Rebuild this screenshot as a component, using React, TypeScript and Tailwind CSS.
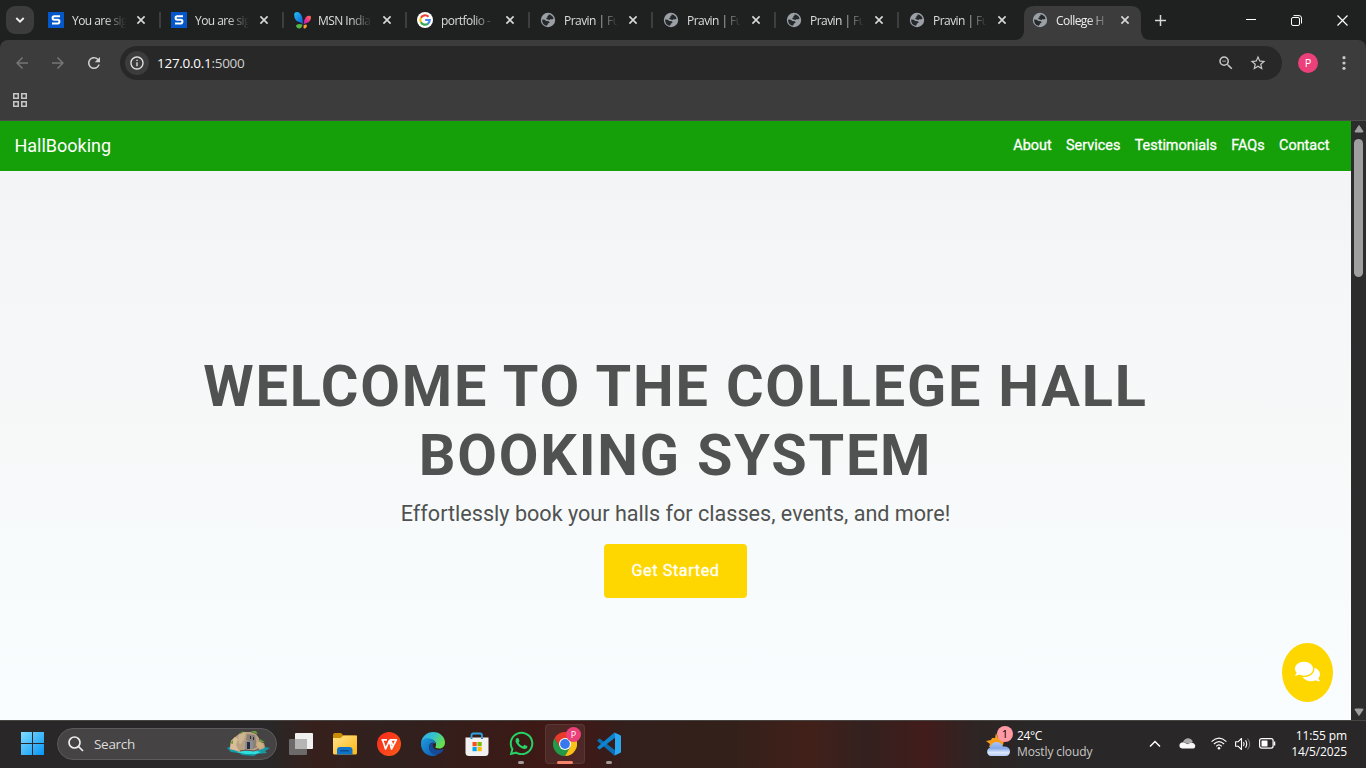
import React from "react";
import { FaComments, FaWhatsapp } from "react-icons/fa";
import { MdStarBorder, MdZoomOut, MdRefresh, MdArrowBack, MdArrowForward, MdInfoOutline } from "react-icons/md";

const UI = "font-['Open_Sans','Noto_Sans',sans-serif]";

function SIcon() {
  return (
    <svg width="16" height="16" viewBox="0 0 16 16">
      <rect width="16" height="16" fill="#0457c9" />
      <path d="M12 4.300H6.200Q4.600 4.300 4.600 6T6.200 7.800H9.900Q11.400 7.800 11.400 9.600T9.900 11.500H4" fill="none" stroke="#fff" strokeWidth="2" />
    </svg>
  );
}

function MsnIcon() {
  return (
    <svg width="18" height="17" viewBox="0 0 18 17" className="shrink-0">
      <defs>
        <linearGradient id="msnA" x1="0" y1="0" x2="1" y2="1">
          <stop offset="0" stopColor="#20c4f4" />
          <stop offset="1" stopColor="#1257d6" />
        </linearGradient>
        <linearGradient id="msnB" x1="1" y1="0" x2="0" y2="1">
          <stop offset="0" stopColor="#ff7a3d" />
          <stop offset=".5" stopColor="#f0308c" />
          <stop offset="1" stopColor="#b01fc8" />
        </linearGradient>
      </defs>
      <path d="M.5 1Q3-.8 5.700 1Q9 4 8.800 12Q7 10.500 4.500 9.800Q1.500 9 .4 5Q0 2 .5 1Z" fill="url(#msnA)" />
      <path d="M16.500 4Q14 3 12 5Q10 7.300 9.600 12.500Q11.500 11 13.500 10.800Q16 10 16.800 7Q17.300 4.800 16.500 4Z" fill="url(#msnB)" />
      <path d="M2 13.500Q3.500 11 8.400 12.500Q8 16.500 5 16.500Q2.500 16.500 2 13.500Z" fill="#55b748" />
      <path d="M9.600 13.300Q13.500 11 12.700 14.800Q11.500 17.500 9.500 16Z" fill="#ff9a2e" />
    </svg>
  );
}

function GoogleIcon() {
  return (
    <svg width="16" height="16" viewBox="0 0 16 16">
      <circle cx="8" cy="8" r="8" fill="#fff" />
      <g fill="none" strokeWidth="2.200">
        <path d="M11.500 4.800A4.700 4.700 0 0 0 3.900 5.700" stroke="#ea4335" />
        <path d="M3.900 5.700A4.700 4.700 0 0 0 3.900 10.300" stroke="#fbbc05" />
        <path d="M3.900 10.300A4.700 4.700 0 0 0 11 11.600" stroke="#34a853" />
        <path d="M8.200 8H12.700A4.700 4.700 0 0 1 11 11.600" stroke="#4285f4" />
      </g>
    </svg>
  );
}

function GlobeIcon() {
  return (
    <svg width="16" height="16" viewBox="0 0 16 16">
      <circle cx="8" cy="8" r="7.200" fill="#9aa0a6" />
      <path d="M8.600 2.300L10.700 3Q13 4.200 13.600 6.600L11.900 7.400L10.700 6.900L9.700 7.900L7.800 7.600L6.200 6.900L6.600 5.700L7.800 5.200L7.200 4.200L8.600 3.600Z" fill="#26292b" />
      <path d="M2.100 7.400L4.800 7.700L6.200 8.900L9 9.300L9.600 10.700L8 11.400L7.500 13L6.500 13.700Q2 12.500 2.100 7.400Z" fill="#26292b" />
    </svg>
  );
}

function CloseX() {
  return (
    <svg width="10" height="10" viewBox="0 0 10 10">
      <path d="M1.400 1.400L8.600 8.600M8.600 1.400L1.400 8.600" stroke="#d8dad9" strokeWidth="1.600" />
    </svg>
  );
}

const tabs: { title: string; icon: () => React.ReactElement; sep?: boolean; active?: boolean }[] = [
  { title: "You are sig", icon: SIcon, sep: true },
  { title: "You are sig", icon: SIcon, sep: true },
  { title: "MSN India", icon: MsnIcon, sep: true },
  { title: "portfolio -", icon: GoogleIcon, sep: true },
  { title: "Pravin | Fu", icon: GlobeIcon, sep: true },
  { title: "Pravin | Fu", icon: GlobeIcon, sep: true },
  { title: "Pravin | Fu", icon: GlobeIcon, sep: true },
  { title: "Pravin | Fu", icon: GlobeIcon },
  { title: "College H", icon: GlobeIcon, active: true },
];

function TabStrip() {
  return (
    <div className="flex h-10 shrink-0 items-stretch bg-[#1f2120]">
      <div className="ml-1.5 mt-1.5 mr-1 flex size-7 items-center justify-center rounded-[9px] bg-[#3c3c3c]">
        <svg width="10" height="8" viewBox="0 0 10 8">
          <path d="M1.300 2L5 5.700L8.700 2" fill="none" stroke="#eee" strokeWidth="1.900" />
        </svg>
      </div>
      {tabs.map((t, i) => (
        <div key={i} className="relative flex w-[123px] items-center pl-[10px]">
          {t.active && (
            <svg className="absolute -left-2 top-1.5" width="137" height="34" viewBox="0 0 137 34">
              <path d="M0 34Q10 34 10 24V10Q10 0 20 0H117Q127 0 127 10V24Q127 34 137 34Z" fill="#3c3c3c" />
            </svg>
          )}
          <span className="relative flex h-4 w-4 items-center">
            <t.icon />
          </span>
          <span
            className={`relative ml-2 mt-px w-[54px] whitespace-nowrap text-[12px] leading-[18px] tracking-[-0.550px] mask-[linear-gradient(to_right,black_60%,transparent)] ${t.active ? "text-[#eee]" : "text-[#dcdedd]"}`}
          >
            {t.title}
          </span>
          <span className="relative ml-[10px]">
            <CloseX />
          </span>
          {t.sep && <span className="ml-auto h-4 w-[2px] bg-[#3d3f3e]" />}
        </div>
      ))}
      <div className="flex w-[31px] items-center pl-[10px]">
        <svg className="shrink-0" width="11" height="11" viewBox="0 0 11 11">
          <path d="M5.500 0V11M0 5.500H11" stroke="#d5d7d6" strokeWidth="1.500" />
        </svg>
      </div>
      <div className="ml-auto flex items-center">
        <div className="flex w-[46px] justify-center">
          <svg width="10" height="10" viewBox="0 0 10 10">
            <path d="M0 4.500H10" stroke="#fff" />
          </svg>
        </div>
        <div className="flex w-[46px] justify-center pr-px">
          <svg width="11" height="11" viewBox="0 0 11 11" fill="none" stroke="#fff">
            <rect x=".5" y="2.500" width="8" height="8" rx="1.500" />
            <path d="M2.500 .6H8Q10.500 .6 10.500 3V8.500" />
          </svg>
        </div>
        <div className="flex w-[46px] justify-center pr-px">
          <svg width="11" height="11" viewBox="0 0 11 11">
            <path d="M.5 .5L10.500 10.500M10.500 .5L.5 10.500" stroke="#fff" strokeWidth="1.200" />
          </svg>
        </div>
      </div>
    </div>
  );
}

function Toolbar() {
  return (
    <div className="shrink-0 bg-[#1f2120]">
      <div className="h-[81px] rounded-t-lg border-b border-[#4d4b4c] bg-[#3c3c3c] pt-1.5">
        <div className="flex h-[34px] items-center">
          <MdArrowBack className="ml-[13px] text-[#757575]" size={18} />
          <MdArrowForward className="ml-[18px] text-[#757575]" size={18} />
          <MdRefresh className="ml-[18px] text-[#d0d0d0]" size={18} />
          <div className="ml-[17px] flex h-[34px] w-[1162px] items-center rounded-full bg-[#282828] pl-[5px]">
            <span className="flex size-6 items-center justify-center rounded-full bg-[#3c3c3c]">
              <MdInfoOutline className="text-[#e3e3e3]" size={16} />
            </span>
            <span className="ml-2 text-[13.500px] leading-4 tracking-[-0.280px] text-white">
              127.0.0.1<span className="text-[#d0d0d0]">:5000</span>
            </span>
            <MdZoomOut className="ml-auto mr-[14px] text-[#c7c7c7]" size={18} />
            <MdStarBorder className="mr-[15px] text-[#c7c7c7]" size={18} />
          </div>
          <span className="ml-4 flex size-5 items-center justify-center rounded-full bg-[#ec407a] text-[11px] text-white">P</span>
          <svg className="ml-6" width="4" height="14" viewBox="0 0 4 14" fill="#c7c7c7">
            <circle cx="2" cy="1.700" r="1.600" />
            <circle cx="2" cy="7" r="1.600" />
            <circle cx="2" cy="12.300" r="1.600" />
          </svg>
        </div>
        <svg className="ml-[13px] mt-[13px]" width="14" height="14" viewBox="0 0 14 14" fill="none" stroke="#c7c7c7" strokeWidth="1.500">
          <rect x=".75" y=".75" width="4.500" height="4.500" />
          <rect x="8.750" y=".75" width="4.500" height="4.500" />
          <rect x=".75" y="8.750" width="4.500" height="4.500" />
          <rect x="8.750" y="8.750" width="4.500" height="4.500" />
        </svg>
      </div>
    </div>
  );
}

function Page() {
  return (
    <div className="flex h-[599px] shrink-0">
      <div className="relative flex w-[1351px] flex-col font-[Roboto,sans-serif]">
        <nav className="flex h-[50px] shrink-0 items-center justify-between bg-[#15a00a] pl-[14.400px] pr-[21.600px] text-white">
          <span className="mb-[2px] text-[18px]">HallBooking</span>
          <div className="flex gap-[14.400px] text-[14.400px] [-webkit-text-stroke:0.3px_white]">
            <span>About</span>
            <span>Services</span>
            <span>Testimonials</span>
            <span>FAQs</span>
            <span>Contact</span>
          </div>
        </nav>
        <main className="flex flex-1 flex-col items-center bg-linear-to-b from-[#f3f4f6] via-[#f7f9f9] to-[#f9fdff] pt-[181px] text-center text-[#505251]">
          <h1 className="w-[1000px] text-[57.600px] font-bold leading-[69.120px] tracking-[1.800px]">
            WELCOME TO THE COLLEGE HALL BOOKING SYSTEM
          </h1>
          <p className="mt-[8px] text-[21.600px] leading-[32.400px]">Effortlessly book your halls for classes, events, and more!</p>
          <button className="mt-[13px] h-[54px] w-[143px] rounded-[4px] bg-[#ffd700] text-[16.200px] tracking-[0.600px] text-white [-webkit-text-stroke:0.3px_white]">
            Get Started
          </button>
        </main>
        <span className="absolute left-[1282px] top-[522px] flex h-[59px] w-[51px] items-center justify-center rounded-[50%] bg-[#ffd700] pb-[2px]">
          <FaComments className="text-white" size={25} />
        </span>
      </div>
      <div className="flex w-[15px] flex-col items-center bg-[#2c2c2c]">
        <svg className="mt-[4px]" width="10" height="8" viewBox="0 0 10 8">
          <path d="M5 .5L9 6.500Q9 7 8.500 7H1.500Q1 7 1 6.500Z" fill="#9f9f9f" stroke="#9f9f9f" strokeLinejoin="round" />
        </svg>
        <div className="mt-[6px] h-[138px] w-[9px] rounded-full bg-[#9f9f9f]" />
        <svg className="mb-[4px] mt-auto" width="10" height="8" viewBox="0 0 10 8">
          <path d="M5 7.500L9 1.500Q9 1 8.500 1H1.500Q1 1 1 1.500Z" fill="#9f9f9f" stroke="#9f9f9f" strokeLinejoin="round" />
        </svg>
      </div>
    </div>
  );
}

function WindowsLogo() {
  return (
    <svg className="ml-[21px] shrink-0" width="23" height="23" viewBox="0 0 23 23">
      <defs>
        <linearGradient id="win" x1="0" y1="0" x2="23" y2="23" gradientUnits="userSpaceOnUse">
          <stop stopColor="#7fdcff" />
          <stop offset="1" stopColor="#0795f5" />
        </linearGradient>
      </defs>
      <path d="M0 0H11V11H0ZM12 0H23V11H12ZM0 12H11V23H0ZM12 12H23V23H12Z" fill="url(#win)" />
    </svg>
  );
}

function IslandArt() {
  return (
    <svg width="44" height="26" viewBox="0 0 44 26">
      <path d="M1 17L6 15L10 18L35 17L39 16L44 17L39 20L41 22L31 23L28 25L16 24L13 22L5 21Z" fill="#159aa5" />
      <path d="M10 21L20 23H30L35 21L30 20H14Z" fill="#30e0df" />
      <path d="M4 18L5 10L9 6L13 3L17 1L25 1L30 3L33 7L34 11L38 12L39 16L37 18L29 20L19 19L14 21L8 19Z" fill="#b9a183" />
      <path d="M4 18L5 10L9 6L12 8L10 14L13 20L8 19Z" fill="#d8bd97" />
      <path d="M13 3L20 1L18 8L14 14L12 8Z" fill="#ceb591" />
      <path d="M21 3L29 4L31 16L27 18L24 11L20 9Z" fill="#8b8078" />
      <path d="M19 10H27V18H19Z" fill="#8d8c91" />
      <path d="M21 11H24V18H21ZM24 5H25V8H24ZM27 6H28V9H27Z" fill="#252c46" />
      <path d="M31 11L35 11L38 16L33 18L30 14Z" fill="#d0af83" />
      <path d="M13 3L17 0V2ZM25 0H30L32 3L28 2ZM34 8L39 11L34 11ZM4 12L7 9L7 13Z" fill="#689c35" />
      <path d="M14 20L20 19L28 20L33 18" fill="none" stroke="#654c4e" />
    </svg>
  );
}

function TaskView() {
  return (
    <svg width="24" height="22" viewBox="0 0 24 22">
      <rect x="6" width="18" height="16" rx="1" fill="#f0f0f0" />
      <rect y="6" width="18" height="16" rx="1" fill="#777" fillOpacity=".85" />
      <rect x="6" y="6" width="12" height="10" fill="#b5b5b5" />
    </svg>
  );
}

function FolderIcon() {
  return (
    <svg width="24" height="22" viewBox="0 0 24 22">
      <defs>
        <linearGradient id="fold" x1="0" y1="0" x2="1" y2="1">
          <stop stopColor="#ffe28a" />
          <stop offset="1" stopColor="#fdb813" />
        </linearGradient>
      </defs>
      <path d="M0 2Q0 0 2 0H8L10.500 2.500H22Q24 2.500 24 5V9H0Z" fill="#c98a06" />
      <path d="M0 5H7.500L10.500 2.500H24V20Q24 21.500 22.500 21.500H1.500Q0 21.500 0 20Z" fill="url(#fold)" />
      <path d="M4 21.500V17Q4 14 7 14H16.500Q19.500 14 19.500 17V21.500Z" fill="#1173c7" />
      <path d="M7.500 17.700H15.500" stroke="#0a4f98" strokeWidth="1.400" strokeLinecap="round" />
    </svg>
  );
}

function WpsIcon() {
  return (
    <svg width="24" height="24" viewBox="0 0 24 24">
      <defs>
        <linearGradient id="wps" x1="0" y1="0" x2="1" y2="1">
          <stop stopColor="#f5281d" />
          <stop offset="1" stopColor="#ff5a19" />
        </linearGradient>
      </defs>
      <circle cx="12" cy="12" r="12" fill="url(#wps)" />
      <path d="M4.500 7.800H10M5.600 8L8.600 17L12.400 8.500L14.500 17L19.300 7.800H13.500L15.600 13" fill="none" stroke="#fff" strokeWidth="1.700" strokeLinejoin="round" />
    </svg>
  );
}

function EdgeIcon() {
  return (
    <svg width="24" height="24" viewBox="0 0 24 24">
      <defs>
        <linearGradient id="edgeTop" x1="0" y1="0" x2="1" y2=".5">
          <stop stopColor="#2fa9e4" />
          <stop offset=".5" stopColor="#35c1cf" />
          <stop offset="1" stopColor="#66e04b" />
        </linearGradient>
        <linearGradient id="edgeLow" x1="0" y1="0" x2="1" y2="1">
          <stop stopColor="#1b9de2" />
          <stop offset="1" stopColor="#1155a8" />
        </linearGradient>
      </defs>
      <path d="M0 11C1 4 6 0 12 0C19 0 24 5 24 10.500C24 14.500 21 16.500 18 16.500C15 16.500 14 15.500 14.500 14.500C16 12 14.500 8 10 7.500C5 7 1 9 0 11Z" fill="url(#edgeTop)" />
      <path d="M0 12C0 7 5 5.500 9 6.500C12.500 7.300 14.500 9.500 14.300 12C11.500 9.300 8 11.300 8 14.800C8 19.500 12.500 23 17 22.200C15.500 23.500 13.500 24 11.500 24C5 24 0 18.500 0 12Z" fill="url(#edgeLow)" />
      <path d="M12.500 10.500C8 11.500 7.500 15 8.300 17.500C9.500 21.500 14 24 17.500 22C20 21 21.700 19.400 22.600 17.700C22.800 17.200 22.300 16.900 21.800 17.100C16 19.500 9.500 16.500 12.500 10.500Z" fill="#164a97" />
    </svg>
  );
}

function StoreIcon() {
  return (
    <svg width="24" height="24" viewBox="0 0 24 24">
      <path d="M6.500 7V3.500Q6.500 1.500 8.500 1.500H15Q17 1.500 17 3.500V7" fill="none" stroke="#2ba5e8" strokeWidth="1.800" />
      <path d="M.5 5.500H23.500V20.500Q23.500 24 20 24H4Q.5 24 .5 20.500Z" fill="#f1f1f1" />
      <path d="M6.500 5.500V7M17 5.500V7" stroke="#1b78b5" strokeWidth="1.800" />
      <rect x="7.500" y="10" width="4.200" height="4.200" fill="#f25022" />
      <rect x="12.500" y="10" width="4.200" height="4.200" fill="#7fba00" />
      <rect x="7.500" y="15" width="4.200" height="4.200" fill="#00a4ef" />
      <rect x="12.500" y="15" width="4.200" height="4.200" fill="#ffb900" />
    </svg>
  );
}

function ChromeIcon() {
  return (
    <svg width="24" height="24" viewBox="0 0 24 24">
      <path d="M1.600 6A12 12 0 0 0 12 24L17.200 15L12 12L6.800 15Z" fill="#229a48" />
      <path d="M12 6H22.400A12 12 0 0 1 12 24L17.200 15Z" fill="#fbc116" />
      <path d="M12 6H22.400A12 12 0 0 0 1.600 6L6.800 15Z" fill="#e8392b" />
      <circle cx="12" cy="12" r="6" fill="#fff" />
      <circle cx="12" cy="12" r="4.900" fill="#3679ee" />
    </svg>
  );
}

function CodeIcon() {
  return (
    <svg width="24" height="24" viewBox="0 0 24 24">
      <path d="M.4 8.200L2 6.700Q2.500 6.400 3 6.700L18 18.200V23.500Q17.300 23.500 16.800 23L.4 9.100Q0 8.600 .4 8.200Z" fill="#0b70b8" />
      <path d="M.4 15.800L2 17.300Q2.500 17.600 3 17.300L18 5.800V.5Q17.300 .5 16.800 1L.4 14.900Q0 15.400 .4 15.800Z" fill="#0c84cf" />
      <path d="M17.200 .4L23 3.100Q24 3.600 24 4.600V19.400Q24 20.400 23 20.900L17.200 23.700Q18 23.500 18 22.500V1.500Q18 .6 17.200 .4Z" fill="#2aa7f1" />
    </svg>
  );
}

function Slot({ children, state }: { children: React.ReactNode; state?: "open" | "active" }) {
  return (
    <div className="flex w-11 justify-center">
      <div
        className={`relative flex h-10 w-10 items-center justify-center rounded ${state === "active" ? "border border-white/7 bg-white/7" : ""}`}
      >
        {children}
        {state === "open" && <span className="absolute bottom-0 h-[3px] w-1.5 rounded-full bg-[#a09a99]" />}
        {state === "active" && <span className="absolute -bottom-px h-[3px] w-4 rounded-full bg-[#f5846b]" />}
      </div>
    </div>
  );
}

function WeatherIcon() {
  return (
    <svg width="26" height="26" viewBox="0 0 26 26">
      <defs>
        <linearGradient id="cloud" x1="0" y1="0" x2="0" y2="1">
          <stop stopColor="#a9c4f4" />
          <stop offset=".45" stopColor="#84a9e8" />
          <stop offset=".75" stopColor="#dbe7fc" />
          <stop offset="1" stopColor="#b4ccf6" />
        </linearGradient>
      </defs>
      <path d="M11 2L13 7L20 6L18 14L10 17L4 16L5 13L1 10L6 9L7 7L10 7Z" fill="#f79b1b" />
      <path d="M5.500 25A4.500 4.500 0 0 1 5 16.500Q6 11.500 11.500 11Q16.500 11 18 15.500Q24.500 15 25 20Q25 25 20.500 25Z" fill="url(#cloud)" />
    </svg>
  );
}

function Taskbar() {
  return (
    <div className="flex h-12 shrink-0 items-center border-t border-[#474442] bg-[linear-gradient(to_right,#292727_0px,#292727_270px,#37201c_315px,#30211f_390px,#3b1a16_520px,#421715_570px,#331f1c_625px,#33201a_730px,#42201a_810px,#33211f_865px,#421c1b_925px,#2e2524_975px,#292727_1030px,#292727_100%)] pb-[2px] text-white">
      <WindowsLogo />
      <div className="ml-[13px] flex h-8 w-[220px] items-center rounded-full border border-[#5c5a5a] bg-[#454343] pl-[11px] pr-1.5">
        <svg className="-ml-px" width="16" height="16" viewBox="0 0 16 16" fill="none" stroke="#eee" strokeWidth="1.700">
          <circle cx="6.500" cy="6.500" r="5.500" />
          <path d="M10.500 10.500L15 15" />
        </svg>
        <span className="ml-[10px] text-[13.500px] leading-4 tracking-[-0.3px] text-[#dcdcdc]">Search</span>
        <span className="ml-auto">
          <IslandArt />
        </span>
      </div>
      <div className="ml-[2px] flex">
        <Slot><TaskView /></Slot>
        <Slot><FolderIcon /></Slot>
        <Slot><WpsIcon /></Slot>
        <Slot><EdgeIcon /></Slot>
        <Slot><StoreIcon /></Slot>
        <Slot state="open"><FaWhatsapp className="text-[#25d366]" size={27} /></Slot>
        <Slot state="active">
          <ChromeIcon />
          <span className="absolute left-[20px] top-[2px] flex size-[15px] items-center justify-center rounded-full bg-[#ec407a] text-[9px] leading-none">P</span>
        </Slot>
        <Slot state="open"><CodeIcon /></Slot>
      </div>
      <div className="ml-auto flex items-center text-[12px] leading-4">
        <span className="relative mr-[6px]">
          <WeatherIcon />
          <span className="absolute left-[12px] -top-[5px] flex size-4 items-center justify-center rounded-full bg-[#ff99a4] text-[11px] text-black">1</span>
        </span>
        <div className="w-[132px] whitespace-nowrap tracking-[-0.120px]">
          <div className="tracking-[-0.4px]">24°C</div>
          <div className="text-[#c9c7c6]">Mostly cloudy</div>
        </div>
        <svg width="12" height="8" viewBox="0 0 12 8">
          <path d="M1 6.500L6 1.500L11 6.500" fill="none" stroke="#fff" strokeWidth="1.500" />
        </svg>
        <svg className="ml-[18px]" width="17" height="11" viewBox="0 0 17 11">
          <path d="M4 4Q6 0 9.500 .3Q13 .8 13.800 4L10 6Z" fill="#a9a9a9" />
          <path d="M3 10.500Q.3 10 .4 7.300Q.8 4.300 4.500 4.300L9 6.300Q12 3.500 15 5.500Q17 7 16 9.300Q15.500 10.500 14 10.500Z" fill="#f7f7f7" />
        </svg>
        <svg className="ml-[15px]" width="16" height="13" viewBox="0 0 16 13" fill="none" stroke="#fff" strokeWidth="1.200">
          <path d="M.6 4.600Q8-2.400 15.400 4.600" />
          <path d="M2.900 7Q8 2.200 13.100 7" />
          <path d="M5.200 9.300Q8 6.500 10.800 9.300" />
          <circle cx="8" cy="11.200" r="1.300" fill="#fff" stroke="none" />
        </svg>
        <svg className="ml-2" width="16" height="14" viewBox="0 0 16 14" fill="none" stroke="#fff" strokeWidth="1.100">
          <path d="M.6 4.800H3L6.500 1.500V12.500L3 9.200H.6Z" strokeLinejoin="round" />
          <path d="M8.500 5Q9.800 7 8.500 9M10.500 3.300Q13 7 10.500 10.700" />
          <path d="M12.500 1.500Q17 7 12.500 12.500" stroke="#777" />
        </svg>
        <svg className="ml-2" width="17" height="11" viewBox="0 0 17 11">
          <rect x=".6" y=".6" width="13.500" height="9.500" rx="2" fill="none" stroke="#fff" strokeWidth="1.200" />
          <rect x="2.500" y="2.500" width="6" height="6" rx=".5" fill="#fff" />
          <path d="M15.500 3.500V7.500" stroke="#fff" strokeWidth="1.500" />
        </svg>
        <div className="mr-[19px] w-[71px] text-right tracking-[-0.120px]">
          <div>11:55 pm</div>
          <div>14/5/2025</div>
        </div>
      </div>
    </div>
  );
}

export default function App() {
  return (
    <div className={`flex h-[768px] w-[1366px] flex-col overflow-hidden ${UI}`}>
      <TabStrip />
      <Toolbar />
      <Page />
      <Taskbar />
    </div>
  );
}
